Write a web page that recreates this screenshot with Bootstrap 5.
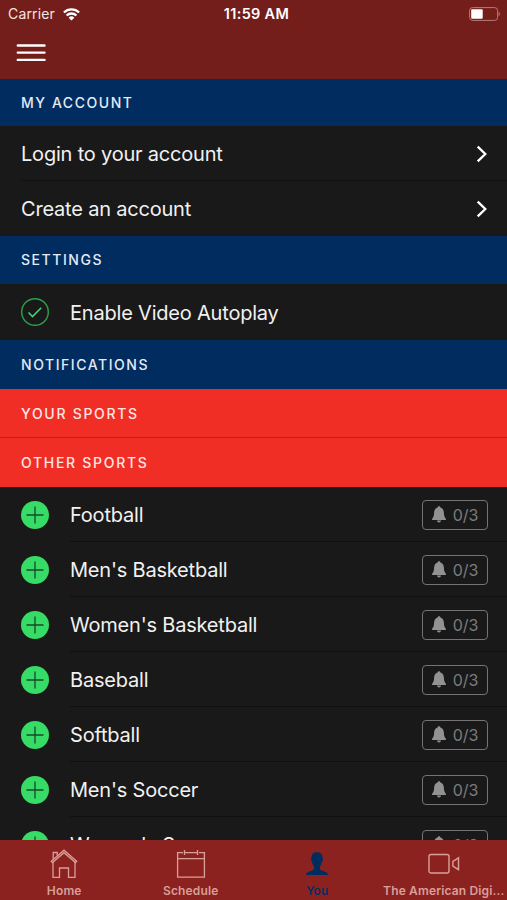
<!DOCTYPE html>
<html lang="en">
<head>
<meta charset="utf-8">
<meta name="viewport" content="width=device-width, initial-scale=1">
<title>Account</title>
<link href="https://cdn.jsdelivr.net/npm/bootstrap@5.3.0/dist/css/bootstrap.min.css" rel="stylesheet">
<style>
body{font-family:Inter,Roboto,"Liberation Sans",sans-serif;background:#191919;color:#f1f1f1;height:900px;line-height:1}
svg{display:block;flex:none}
.screen{height:900px}
.topbar{background:#731e1b;height:79px;flex:none}
.status{height:28px;padding:0 7px 0 8px;font-size:14px;letter-spacing:.15px;color:#f5e4e2}
.status>*{flex:1 1 0}
.status .clock{font-weight:600;font-size:14.5px;letter-spacing:.3px;color:#fff;padding-left:5px}
.menu-btn{margin:14px 0 0 16px;width:30px}
.section{background:#002c60;height:48px;padding:0 21px;font-size:14px;font-weight:500;letter-spacing:1.55px;color:#e3eaf5;flex:none}
.section.first{height:47px}
.section.tall{height:49px}
.section.red{background:#f02e26;color:#ffe6e3;letter-spacing:1.7px}
.section.ruled{border-bottom:1px solid #b9231f;padding-top:2px}
.entry{height:55px;padding-left:21px;font-size:20px;letter-spacing:-.2px;flex:none}
.entry.setting{height:56px}
.entry.setting span{padding-top:2px}
.entry .body{height:100%;padding:2px 19px 0 0;border-bottom:1px solid #101010}
.entry .body.last{border:0;padding-top:0}
.entry .icon{width:49px}
.counter{width:66px;height:30px;margin-bottom:1px;border:1.5px solid #747474;border-radius:4px;color:#7c7c7c;font-size:16px;letter-spacing:-.1px;gap:7px}
.tabs{background:#8c221f;height:60px;flex:none;color:#d99f99;font-size:12px;font-weight:600;letter-spacing:.15px;padding-left:1px}
.tabs>div{width:126.500px;padding-top:8px}
.tabs svg{height:32px}
.tabs span{line-height:17px;margin-top:2px}
.tabs .current{color:#002c60}
.tabs .current span{font-weight:500}
</style>
<script src="https://cdn.jsdelivr.net/npm/bootstrap@5.3.0/dist/js/bootstrap.bundle.min.js"></script>
</head>
<body class="overflow-hidden">
<svg width="0" height="0" class="position-absolute" aria-hidden="true">
<symbol id="plus" viewBox="0 0 28 28"><circle cx="14" cy="14" r="14" fill="#36dc65"/><path d="M5.500 14h17M14 5.500v17" stroke="#17492a" stroke-width="1.300"/></symbol>
<symbol id="bell" viewBox="0 0 14 17"><path d="M7 .3c.9 0 1.400.6 1.400 1.300 2.500.7 3.400 2.600 3.500 5.200.1 3 .5 4.400 2 5.900v1.300H.1v-1.300c1.500-1.500 1.900-2.900 2-5.900.1-2.600 1-4.500 3.500-5.200C5.600.9 6.100.3 7 .3ZM5 14.600h4c-.1 1.200-.9 1.900-2 1.900s-1.900-.7-2-1.900Z" fill="#929292"/></symbol>
<symbol id="chev" viewBox="0 0 12 18"><path d="m1.700 1.600 7.600 7.400-7.600 7.400" fill="none" stroke="#fff" stroke-width="2.300"/></symbol>
</svg>
<div class="screen d-flex flex-column overflow-hidden">
  <header class="topbar">
    <div class="status d-flex align-items-center">
      <div class="d-flex align-items-center gap-2"><span>Carrier</span>
        <svg width="17" height="13" viewBox="0 0 17 13"><g fill="none" stroke="#fff" stroke-width="2.300"><path d="M.9 4.500a10.800 10.800 0 0 1 15.200 0M3.600 7.500a7 7 0 0 1 9.800 0"/></g><path d="M5.600 9.700a4.200 4.200 0 0 1 5.800 0L8.500 12.600Z" fill="#fff"/></svg>
      </div>
      <div class="clock text-center">11:59 AM</div>
      <div class="d-flex justify-content-end">
        <svg width="32" height="14" viewBox="0 0 32 14"><rect x="1.600" y=".6" width="28" height="12.800" rx="3" fill="none" stroke="#b57d79"/><rect x="3.200" y="2.200" width="11.500" height="9.600" rx="1" fill="#fff"/><path d="M30.700 4.800c1.500.6 1.500 3.800 0 4.400Z" fill="#b57d79"/></svg>
      </div>
    </div>
    <div class="menu-btn"><svg width="30" height="22" viewBox="0 0 30 22"><path d="M1.800 3.500h26.700M1.800 10.600h26.700M1.800 17.900h26.700" stroke="#fff" stroke-width="2.400" stroke-linecap="round"/></svg></div>
  </header>

  <div class="section first d-flex align-items-center">MY ACCOUNT</div>
  <div class="entry"><div class="body d-flex align-items-center justify-content-between"><span>Login to your account</span><svg width="12" height="18"><use href="#chev"/></svg></div></div>
  <div class="entry"><div class="body last d-flex align-items-center justify-content-between"><span>Create an account</span><svg width="12" height="18"><use href="#chev"/></svg></div></div>

  <div class="section d-flex align-items-center">SETTINGS</div>
  <div class="entry setting d-flex align-items-center"><div class="icon"><svg width="28" height="28" viewBox="0 0 28 28"><circle cx="14" cy="14" r="13.300" fill="none" stroke="#28a34c" stroke-width="1.400"/><path d="m7.500 14.500 4 4L20.200 9.700" fill="none" stroke="#36dc65" stroke-width="1.600"/></svg></div><span>Enable Video Autoplay</span></div>

  <div class="section tall d-flex align-items-center">NOTIFICATIONS</div>
  <div class="section tall red ruled d-flex align-items-center">YOUR SPORTS</div>
  <div class="section tall red d-flex align-items-center">OTHER SPORTS</div>

  <main class="flex-fill overflow-hidden">
    <div class="entry d-flex align-items-center"><div class="icon"><svg width="28" height="28"><use href="#plus"/></svg></div><div class="body flex-fill d-flex align-items-center justify-content-between"><span>Football</span><div class="counter d-flex align-items-center justify-content-center"><svg width="14" height="17"><use href="#bell"/></svg>0/3</div></div></div>
    <div class="entry d-flex align-items-center"><div class="icon"><svg width="28" height="28"><use href="#plus"/></svg></div><div class="body flex-fill d-flex align-items-center justify-content-between"><span>Men's Basketball</span><div class="counter d-flex align-items-center justify-content-center"><svg width="14" height="17"><use href="#bell"/></svg>0/3</div></div></div>
    <div class="entry d-flex align-items-center"><div class="icon"><svg width="28" height="28"><use href="#plus"/></svg></div><div class="body flex-fill d-flex align-items-center justify-content-between"><span>Women's Basketball</span><div class="counter d-flex align-items-center justify-content-center"><svg width="14" height="17"><use href="#bell"/></svg>0/3</div></div></div>
    <div class="entry d-flex align-items-center"><div class="icon"><svg width="28" height="28"><use href="#plus"/></svg></div><div class="body flex-fill d-flex align-items-center justify-content-between"><span>Baseball</span><div class="counter d-flex align-items-center justify-content-center"><svg width="14" height="17"><use href="#bell"/></svg>0/3</div></div></div>
    <div class="entry d-flex align-items-center"><div class="icon"><svg width="28" height="28"><use href="#plus"/></svg></div><div class="body flex-fill d-flex align-items-center justify-content-between"><span>Softball</span><div class="counter d-flex align-items-center justify-content-center"><svg width="14" height="17"><use href="#bell"/></svg>0/3</div></div></div>
    <div class="entry d-flex align-items-center"><div class="icon"><svg width="28" height="28"><use href="#plus"/></svg></div><div class="body flex-fill d-flex align-items-center justify-content-between"><span>Men's Soccer</span><div class="counter d-flex align-items-center justify-content-center"><svg width="14" height="17"><use href="#bell"/></svg>0/3</div></div></div>
    <div class="entry d-flex align-items-center"><div class="icon"><svg width="28" height="28"><use href="#plus"/></svg></div><div class="body flex-fill d-flex align-items-center justify-content-between"><span>Women's Soccer</span><div class="counter d-flex align-items-center justify-content-center"><svg width="14" height="17"><use href="#bell"/></svg>0/3</div></div></div>
  </main>

  <nav class="tabs d-flex">
    <div class="d-flex flex-column align-items-center"><svg width="32" viewBox="0 0 32 32"><g fill="none" stroke="#d99f99" stroke-width="1.300"><path d="M5 14v15.300h6.500V20h9v9.300H27V14"/><path d="m3.300 13.200 12.700-11 12.700 11-1.200 1.300L16 4.700 4.500 14.500Z"/><path d="M5.200 11V4.500h4V7.500"/></g></svg><span>Home</span></div>
    <div class="d-flex flex-column align-items-center"><svg width="32" viewBox="0 0 32 32"><path d="M10 4.700h12M8 4.700H2.600v24.500h26.800V4.700H24M2.600 10.600h26.800M9.500 2v5M22.500 2v5" fill="none" stroke="#d99f99" stroke-width="1.300"/></svg><span>Schedule</span></div>
    <div class="current d-flex flex-column align-items-center"><svg width="32" viewBox="0 0 32 32"><path d="M16 4.200c3.800 0 5.600 1.900 5.500 5.800.8.300.6 2.800-.4 3.500-.4 2.200-1.100 3.800-2.100 4.900v3.200c1.500 1.900 7.900 1.600 7.900 5.400H5.100c0-3.800 6.400-3.500 7.900-5.400v-3.200c-1-1.100-1.700-2.700-2.100-4.900-1-.7-1.200-3.200-.4-3.500-.1-3.900 1.700-5.800 5.500-5.800Z" fill="#002c60"/></svg><span>You</span></div>
    <div class="d-flex flex-column align-items-center"><svg width="32" viewBox="0 0 32 32"><g fill="none" stroke="#d99f99" stroke-width="1.400"><rect x="1" y="6.500" width="20" height="18.500" rx="2"/><path d="m30.500 9.800-5.600 3.600v4.700l5.600 3.600Z"/></g></svg><span class="text-nowrap">The American Digi...</span></div>
  </nav>
</div>
</body>
</html>
